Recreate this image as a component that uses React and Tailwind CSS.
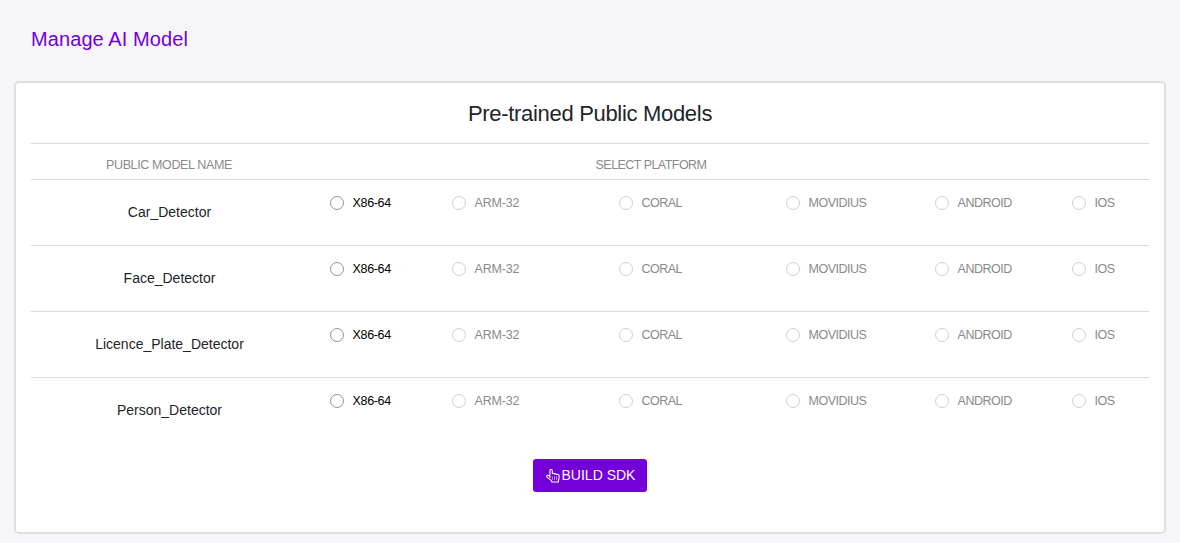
const models = ["Car_Detector", "Face_Detector", "Licence_Plate_Detector", "Person_Detector"];

const platforms = [
  { name: "X86-64", enabled: true, tracking: "tracking-[-0.35px]" },
  { name: "ARM-32", tracking: "tracking-[-0.22px]" },
  { name: "CORAL", tracking: "tracking-[-0.55px]" },
  { name: "MOVIDIUS", tracking: "tracking-[-0.5px]" },
  { name: "ANDROID", tracking: "tracking-[-0.48px]" },
  { name: "IOS", tracking: "tracking-[-0.5px]" },
];

function HandPointerIcon() {
  return (
    <svg viewBox="0 0 14 14" className="mr-[2px] size-3.5 shrink-0" fill="none" stroke="currentColor" strokeWidth="1.05" strokeLinecap="round" strokeLinejoin="round">
      <path d="M3.9 8.4V1.7a1.2 1.2 0 0 1 2.4 0v3c.6-.6 1.8-.5 2.2.4.6-.5 1.7-.3 2.1.5.9-.5 2.5-.1 2.5 1.3v1.6c0 .5-.1 1-.2 1.4l-.5 1.6v1.4H5.7v-1.1L.9 8.2C.2 7.1 1.2 5.9 2.4 6.3c.4.1.7.4.9.7z" />
      <path d="M6.3 7.8v2.7M8.5 7.8v2.7M10.7 7.8v2.7" strokeWidth="0.6" />
    </svg>
  );
}

function Platform({ model, platform }) {
  return (
    <label className={`flex h-5 items-center whitespace-nowrap text-[12.5px] ${platform.tracking} ${platform.enabled ? "text-black" : "text-[#8a8a8a]"}`}>
      <input
        type="radio"
        name={model}
        disabled={!platform.enabled}
        className={`mr-[8.6px] size-3.5 shrink-0 appearance-none rounded-full border bg-white ${platform.enabled ? "border-[#949494]" : "border-[#d0d0d0]"}`}
      />
      {platform.name}
    </label>
  );
}

export default function App() {
  return (
    <main className="h-[543px] bg-[#f6f6f9] px-3.5 font-['Liberation_Sans',Arial,sans-serif] text-[#212529]">
      <h1 className="h-[81px] pt-6 pl-[17px] text-[20px] leading-[30px] tracking-[0.09px] text-[#7300d9]">Manage AI Model</h1>
      <section className="h-[453px] rounded-[5px] border-2 border-[#dedfe0] bg-white px-[15px]">
        <h2 className="h-[60px] pt-[15px] text-center text-[22px] leading-8 tracking-[-0.31px]">Pre-trained Public Models</h2>
        <div className="grid h-9 grid-cols-[276px_1fr] border-t border-[#d9dadb] pt-[11px] text-center text-[12.5px] leading-5 text-[#8a8a8a]">
          <div className="tracking-[-0.37px]">PUBLIC MODEL NAME</div>
          <div className="pr-[154px] tracking-[-0.54px]">SELECT PLATFORM</div>
        </div>
        {models.map((model) => (
          <div key={model} className="grid h-[66px] grid-cols-[276px_1fr] border-t border-[#d9dadb]">
            <div className="pt-[22px] pl-px text-center text-[14px] leading-5">{model}</div>
            <div className="grid grid-cols-[122px_167px_167px_149px_137px_1fr] pt-[13px] pl-[23px]">
              {platforms.map((platform) => (
                <Platform key={platform.name} model={model} platform={platform} />
              ))}
            </div>
          </div>
        ))}
        <div className="flex justify-center pt-4">
          <button className="flex h-[33px] w-[114px] items-center justify-center rounded-[3px] bg-[#7300d9] pl-px text-[14px] text-white">
            <HandPointerIcon />
            BUILD SDK
          </button>
        </div>
      </section>
    </main>
  );
}
